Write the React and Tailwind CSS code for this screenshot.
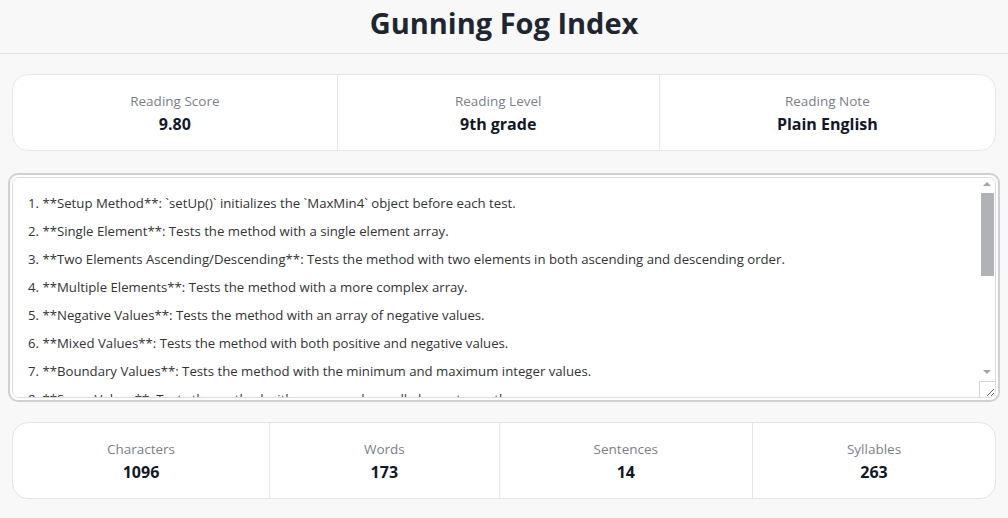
import React from 'react';

const text = `1. **Setup Method**: \`setUp()\` initializes the \`MaxMin4\` object before each test.
2. **Single Element**: Tests the method with a single element array.
3. **Two Elements Ascending/Descending**: Tests the method with two elements in both ascending and descending order.
4. **Multiple Elements**: Tests the method with a more complex array.
5. **Negative Values**: Tests the method with an array of negative values.
6. **Mixed Values**: Tests the method with both positive and negative values.
7. **Boundary Values**: Tests the method with the minimum and maximum integer values.
8. **Same Values**: Tests the method with an array where all elements are the same.
9. **Large Array**: Tests the method with a large array to check performance.
10. **Empty Array**: Tests that the method throws an exception for an empty array.
11. **Null Input**: Tests that the method handles a null input gracefully.
These tests cover a wide range of scenarios. Run them with JUnit.
Make sure JUnit is on your classpath.`;

function StatCard({ items }) {
  return (
    <div className="mx-3 flex rounded-2xl border border-[#e5e5e5] bg-white">
      {items.map((item, i) => (
        <div
          key={item.label}
          className={`flex flex-auto flex-col items-center justify-center h-[75px] ${i > 0 ? 'border-l border-[#e5e5e5]' : ''}`}
        >
          <p className="text-[13.5px] leading-5 text-[#7a7f87]">{item.label}</p>
          <p className="mt-[3px] text-[16px] font-bold leading-5 text-[#111827]">{item.value}</p>
        </div>
      ))}
    </div>
  );
}

// classic scrollbar drawn over the textarea's right edge
function FakeScrollbar() {
  return (
    <div className="pointer-events-none absolute top-0 right-[3px] bottom-[2px] flex w-[16px] flex-col items-center">
      <div className="flex h-[18px] justify-center pt-[7px]">
        <span className="h-0 w-0 border-x-[4px] border-b-[4px] border-x-transparent border-b-[#a3a3a6]" />
      </div>
      <div className="h-[83px] w-[13px] bg-[#b1b2b6]" />
      <div className="flex-1" />
      <div className="flex justify-center pb-[7px]">
        <span className="h-0 w-0 border-x-[4px] border-t-[4px] border-x-transparent border-t-[#a3a3a6]" />
      </div>
      <div className="h-[17px] w-full border-l border-t border-[#d6d6d6]" />
    </div>
  );
}

export default function App() {
  return (
    <div className="min-h-[518px] bg-[#f8f8f8]" style={{ fontFamily: '"Open Sans", "Noto Sans", sans-serif' }}>
      <header className="flex h-[54px] items-center justify-center border-b border-[#e2e2e2]">
        <h1 className="text-[29px] font-bold text-[#1f2633] -mt-[8px]">Gunning Fog Index</h1>
      </header>
      <div className="flex flex-col gap-[20px] pt-[20px] pb-[18px]">
        <StatCard
          items={[
            { label: 'Reading Score', value: '9.80' },
            { label: 'Reading Level', value: '9th grade' },
            { label: 'Reading Note', value: 'Plain English' },
          ]}
        />
        <div className="relative mx-[8px] mt-[2px] rounded-[10px] border-2 border-[#d0d0d4] bg-white p-[2px]">
          <textarea
            readOnly
            defaultValue={text}
            className="block h-[221px] w-full resize-y overflow-y-scroll rounded-[7px] border border-[#dcdcdc] bg-white py-[11px] pl-[15px] pr-[20px] text-[13.2px] leading-[28px] text-[#333] outline-none [scrollbar-width:none]"
          />
          <FakeScrollbar />
        </div>
        <StatCard
          items={[
            { label: 'Characters', value: '1096' },
            { label: 'Words', value: '173' },
            { label: 'Sentences', value: '14' },
            { label: 'Syllables', value: '263' },
          ]}
        />
      </div>
    </div>
  );
}
